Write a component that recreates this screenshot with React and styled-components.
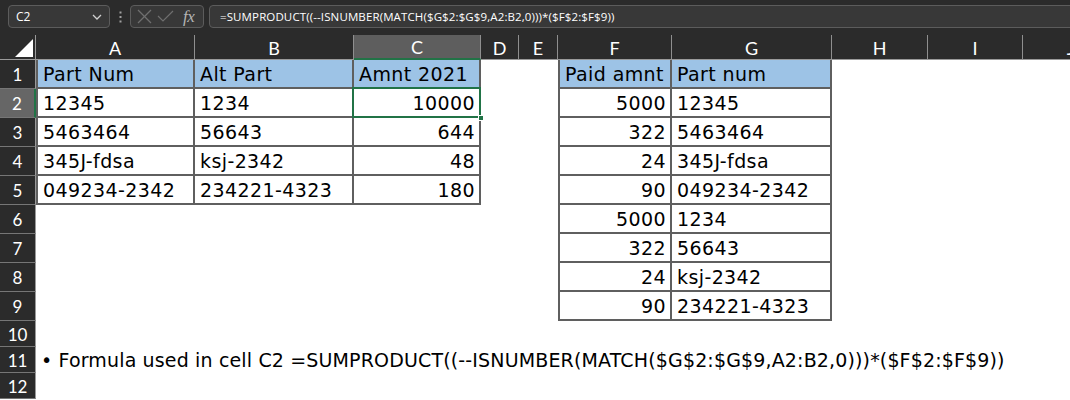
import React from "react";
import styled, { createGlobalStyle, css } from "styled-components";

const GlobalStyle = createGlobalStyle`
  html, body {
    margin: 0;
    padding: 0;
    width: 1070px;
    height: 400px;
    overflow: hidden;
    background: #ffffff;
  }
  * { box-sizing: border-box; }
`;

const HEADER_BG = "#2b2b2b";
const GREEN = "#217346";
const TABLE_LINE = "#5f5f5f";

const Page = styled.div`
  width: 1070px;
  height: 400px;
  overflow: hidden;
  display: flex;
  flex-direction: column;
  background: #fff;
`;

const Toolbar = styled.div`
  height: 35px;
  flex: 0 0 35px;
  background: ${HEADER_BG};
  display: flex;
  align-items: flex-start;
  padding: 5px 0 0 8px;
`;

const NameBox = styled.div`
  width: 102px;
  height: 23px;
  border: 1px solid #5c5c5c;
  border-radius: 4px;
  background: #383838;
  display: flex;
  align-items: center;
  justify-content: space-between;
  padding: 0 7px 0 7px;
  color: #ffffff;
  font-family: "Open Sans", "Liberation Sans", sans-serif;
  font-size: 12px;
`;

const Dots = styled.div`
  width: 20px;
  height: 23px;
  display: flex;
  align-items: center;
  justify-content: center;
`;

const FxBox = styled.div`
  width: 74px;
  height: 23px;
  border: 1px solid #5c5c5c;
  border-radius: 4px;
  background: #383838;
  display: flex;
  align-items: center;
  padding: 0 4px 0 6px;
  gap: 5px;
`;

const FxLabel = styled.span`
  font-family: "Liberation Serif", "DejaVu Serif", serif;
  font-style: italic;
  font-size: 17px;
  color: #b4b4b4;
  margin-left: 4px;
  line-height: 1;
  letter-spacing: -0.5px;
`;

const FormulaBox = styled.div`
  flex: 1;
  height: 23px;
  margin-left: 5px;
  margin-right: -12px;
  border: 1px solid #5c5c5c;
  border-radius: 4px;
  background: #383838;
  display: flex;
  align-items: center;
  padding-left: 10px;
  color: #ffffff;
  font-family: "Open Sans", "Liberation Sans", sans-serif;
  font-size: 11.5px;
  letter-spacing: 0.12px;
  white-space: nowrap;
`;

const Sheet = styled.div`
  display: grid;
  grid-template-columns: 36px 159px 159px 127px 38px 39px 114px 160px 96px 95px 96px;
  grid-template-rows: 25px repeat(9, 29px) repeat(3, 26px);
  width: 1070px;
  overflow: hidden;
`;

const Corner = styled.div`
  background: ${HEADER_BG};
  border-right: 1px solid #9a9a9a;
  border-bottom: 1px solid #9a9a9a;
  display: flex;
  align-items: flex-end;
  justify-content: flex-end;
  padding: 0 2px 2px 0;
`;

const Triangle = styled.div`
  width: 0;
  height: 0;
  border-left: 18px solid transparent;
  border-bottom: 18px solid #ffffff;
`;

const ColHead = styled.div`
  background: ${(p) => (p.$selected ? "#5e5e5e" : HEADER_BG)};
  color: #ffffff;
  font-family: Lato, "Liberation Sans", sans-serif;
  font-size: 18px;
  display: flex;
  align-items: center;
  justify-content: center;
  border-right: 1px solid #8f8f8f;
  border-bottom: ${(p) => (p.$selected ? `2px solid ${GREEN}` : "1px solid #9a9a9a")};
  padding-top: 1px;
  overflow: hidden;
`;

const RowHead = styled.div`
  background: ${(p) => (p.$selected ? "#666666" : HEADER_BG)};
  color: #ffffff;
  font-family: Lato, "Liberation Sans", sans-serif;
  font-size: 17px;
  display: flex;
  align-items: center;
  justify-content: center;
  border-bottom: 1px solid #767676;
  border-right: ${(p) => (p.$selected ? `2px solid ${GREEN}` : "1px solid #9a9a9a")};
  padding-top: 1px;
`;

const Cell = styled.div`
  position: relative;
  background: ${(p) => (p.$head ? "#9dc3e6" : "#ffffff")};
  color: #000000;
  font-family: "DejaVu Sans", "Liberation Sans", sans-serif;
  font-size: 19px;
  letter-spacing: 0.4px;
  white-space: nowrap;
  text-align: ${(p) => (p.$right ? "right" : "left")};
  padding: 2px 4px 0 5px;
  line-height: 25px;
  ${(p) =>
    p.$boxed &&
    css`
      border-right: 2px solid ${TABLE_LINE};
      border-bottom: 2px solid ${TABLE_LINE};
    `}
  ${(p) =>
    p.$first &&
    css`
      border-left: 2px solid ${TABLE_LINE};
    `}
  ${(p) =>
    p.$spill &&
    css`
      overflow: visible;
      z-index: 1;
      line-height: 26px;
      padding-top: 0;
      letter-spacing: 0.15px;
    `}
  ${(p) =>
    p.$active &&
    css`
      &::after {
        content: "";
        position: absolute;
        top: -2px;
        left: -2px;
        right: -2px;
        bottom: -2px;
        border: 2px solid ${GREEN};
        pointer-events: none;
      }
    `}
`;

const Handle = styled.span`
  position: absolute;
  right: -5px;
  bottom: -5px;
  width: 6px;
  height: 6px;
  background: ${GREEN};
  border: 1px solid #ffffff;
  z-index: 2;
`;

const cols = ["A", "B", "C", "D", "E", "F", "G", "H", "I", "J"];

const rows = {
  1: { A: "Part Num", B: "Alt Part", C: "Amnt 2021", F: "Paid amnt", G: "Part num" },
  2: { A: "12345", B: "1234", C: "10000", F: "5000", G: "12345" },
  3: { A: "5463464", B: "56643", C: "644", F: "322", G: "5463464" },
  4: { A: "345J-fdsa", B: "ksj-2342", C: "48", F: "24", G: "345J-fdsa" },
  5: { A: "049234-2342", B: "234221-4323", C: "180", F: "90", G: "049234-2342" },
  6: { F: "5000", G: "1234" },
  7: { F: "322", G: "56643" },
  8: { F: "24", G: "ksj-2342" },
  9: { F: "90", G: "234221-4323" },
  10: {},
  11: {
    A: "• Formula used in cell C2 =SUMPRODUCT((--ISNUMBER(MATCH($G$2:$G$9,A2:B2,0)))*($F$2:$F$9))",
  },
  12: {},
};

const FORMULA = "=SUMPRODUCT((--ISNUMBER(MATCH($G$2:$G$9,A2:B2,0)))*($F$2:$F$9))";

function cellProps(r, c) {
  const inT1 = r >= 1 && r <= 5 && (c === "A" || c === "B" || c === "C");
  const inT2 = r >= 1 && r <= 9 && (c === "F" || c === "G");
  const boxed = inT1 || inT2;
  return {
    $boxed: boxed,
    $first: boxed && (c === "A" || c === "F"),
    $head: boxed && r === 1,
    $right: boxed && r > 1 && (c === "C" || c === "F"),
    $spill: r === 11 && c === "A",
    $active: r === 2 && c === "C",
  };
}

export default function App() {
  return (
    <Page>
      <GlobalStyle />
      <Toolbar>
        <NameBox>
          <span>C2</span>
          <svg width="10" height="6" viewBox="0 0 10 6">
            <polyline points="1,1 5,5 9,1" fill="none" stroke="#d0d0d0" strokeWidth="1.3" />
          </svg>
        </NameBox>
        <Dots>
          <svg width="3" height="12" viewBox="0 0 3 12">
            <rect x="0.5" y="0.5" width="2" height="2" fill="#a0a0a0" />
            <rect x="0.5" y="5" width="2" height="2" fill="#a0a0a0" />
            <rect x="0.5" y="9.5" width="2" height="2" fill="#a0a0a0" />
          </svg>
        </Dots>
        <FxBox>
          <svg width="15" height="15" viewBox="0 0 15 15">
            <line x1="1" y1="1" x2="14" y2="14" stroke="#6f6f6f" strokeWidth="1.2" />
            <line x1="14" y1="1" x2="1" y2="14" stroke="#6f6f6f" strokeWidth="1.2" />
          </svg>
          <svg width="17" height="13" viewBox="0 0 17 13">
            <polyline points="1,6 6,11 16,1" fill="none" stroke="#6f6f6f" strokeWidth="1.2" />
          </svg>
          <FxLabel>fx</FxLabel>
        </FxBox>
        <FormulaBox>{FORMULA}</FormulaBox>
      </Toolbar>
      <Sheet>
        <Corner>
          <Triangle />
        </Corner>
        {cols.map((c) => (
          <ColHead key={c} $selected={c === "C"}>
            {c}
          </ColHead>
        ))}
        {Object.keys(rows).map((rk) => {
          const r = Number(rk);
          return (
            <React.Fragment key={rk}>
              <RowHead $selected={r === 2}>{r}</RowHead>
              {cols.map((c) => {
                const p = cellProps(r, c);
                return (
                  <Cell key={c} {...p}>
                    {rows[r][c] || ""}
                    {p.$active && <Handle />}
                  </Cell>
                );
              })}
            </React.Fragment>
          );
        })}
      </Sheet>
    </Page>
  );
}
